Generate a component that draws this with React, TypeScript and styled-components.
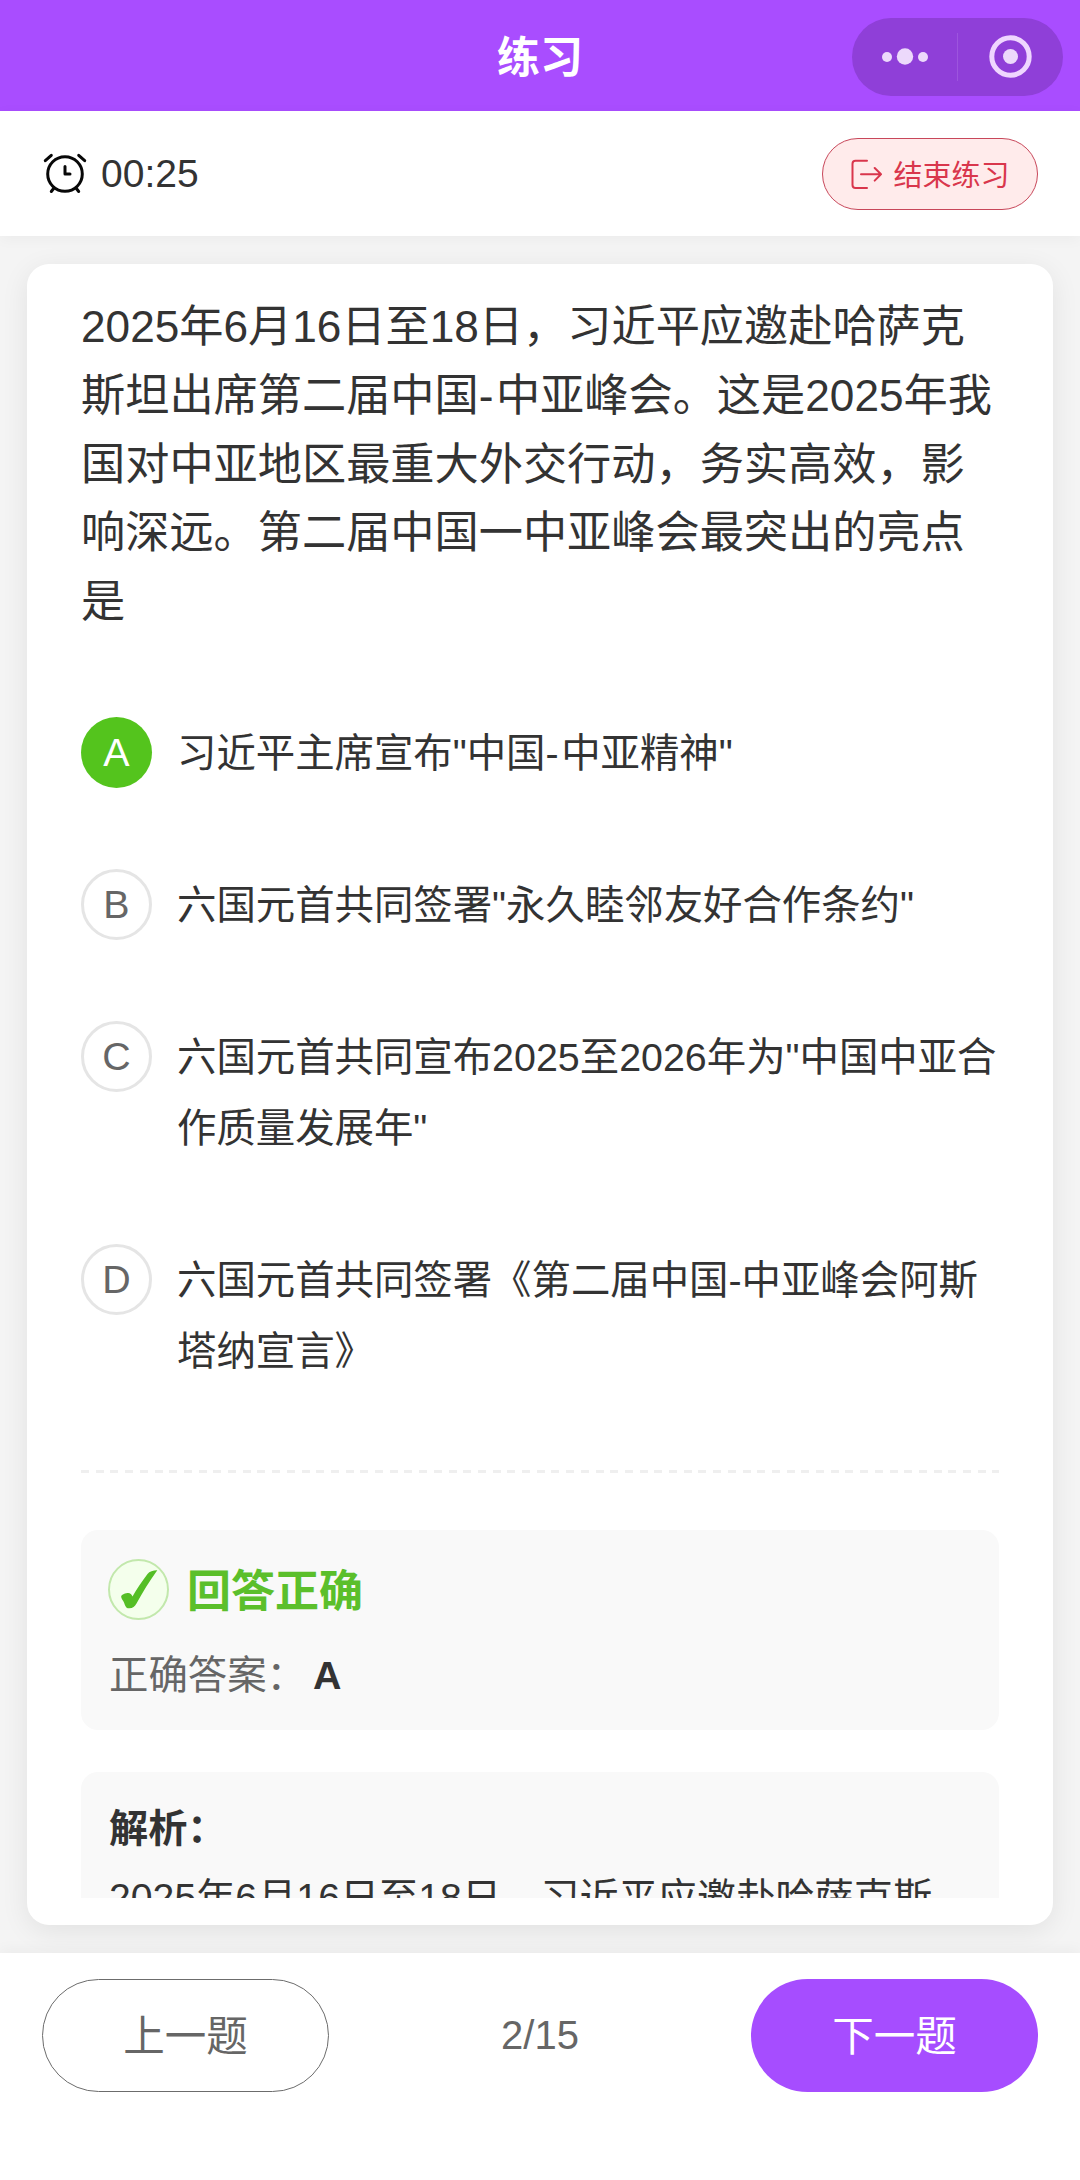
import React from "react";
import styled, { createGlobalStyle } from "styled-components";

const GlobalStyle = createGlobalStyle`
  * { box-sizing: border-box; }
  body {
    margin: 0;
    background: #f4f4f4;
    font-family: "Liberation Sans", "Noto Sans CJK SC", sans-serif;
    color: #333;
    text-autospace: no-autospace;
    text-spacing-trim: space-all;
  }
  button { font-family: inherit; margin: 0; padding: 0; cursor: pointer; }
`;

const Page = styled.div`
  display: flex;
  flex-direction: column;
  width: 1080px;
  height: 2180px;
  overflow: hidden;
  background: #f4f4f4;
`;

const NavBar = styled.header`
  display: grid;
  grid-template-columns: 1fr auto 1fr;
  align-items: center;
  flex: none;
  height: 111px;
  padding: 3px 17px 0;
  background: #a94dff;
`;

const NavTitle = styled.h1`
  grid-column: 2;
  margin: 0;
  padding-top: 2px;
  font-size: 43px;
  line-height: 60px;
  font-weight: 700;
  color: #fff;
`;

const Capsule = styled.div`
  justify-self: end;
  display: flex;
  align-items: center;
  width: 211px;
  height: 78px;
  border-radius: 39px;
  background: #8f3fd8;
`;

const CapsuleHalf = styled.div`
  flex: 1;
  display: flex;
  align-items: center;
  justify-content: center;
`;

const CapsuleDivider = styled.div`
  width: 1px;
  height: 48px;
  background: #9d55de;
`;

const StatusBar = styled.section`
  position: relative;
  z-index: 1;
  display: flex;
  align-items: center;
  justify-content: space-between;
  flex: none;
  height: 125px;
  padding: 1px 42px 0;
  background: #fff;
  box-shadow: 0 3px 14px rgba(0, 0, 0, 0.04);
`;

const Timer = styled.div`
  display: flex;
  align-items: center;
  gap: 13px;
  font-size: 39px;
  line-height: 48px;
`;

const EndButton = styled.button`
  display: flex;
  align-items: center;
  justify-content: center;
  gap: 11px;
  width: 216px;
  height: 72px;
  border: 1px solid #c8475a;
  border-radius: 36px;
  background: #ffebeb;
  color: #d9364c;
  font-size: 29px;
`;

const EndLabel = styled.span`
  padding-bottom: 3px;
`;

const Main = styled.main`
  flex: 1;
  min-height: 0;
  display: flex;
  padding: 28px 27px;
`;

const Card = styled.article`
  flex: 1;
  min-width: 0;
  padding: 29px 54px 27px;
  border-radius: 22px;
  background: #fff;
  box-shadow: 0 6px 28px rgba(0, 0, 0, 0.08);
`;

const Scroller = styled.div`
  height: 100%;
  overflow: hidden;
`;

const Question = styled.p`
  margin: 0;
  font-size: 44.2px;
  line-height: 68.8px;
`;

const Hyphen = styled.span`
  letter-spacing: 2.5px;
`;

const Options = styled.ul`
  display: flex;
  flex-direction: column;
  gap: 81px;
  margin: 80px 0 0;
  padding: 0;
  list-style: none;
`;

const Option = styled.li`
  display: flex;
  gap: 25px;
`;

const Letter = styled.span<{ $correct?: boolean }>`
  display: flex;
  align-items: center;
  justify-content: center;
  flex: none;
  width: 71px;
  height: 71px;
  border-radius: 50%;
  border: ${(p) => (p.$correct ? "none" : "3px solid #e5e5e5")};
  background: ${(p) => (p.$correct ? "#54c41d" : "#fff")};
  color: ${(p) => (p.$correct ? "#fff" : "#666")};
  font-size: 39.4px;
  line-height: 1;
`;

const OptionText = styled.span`
  flex: 1;
  padding-top: 1px;
  margin-bottom: -1px;
  font-size: 39.4px;
  line-height: 71px;
`;

const Divider = styled.div`
  height: 3px;
  margin-top: 84px;
  background: repeating-linear-gradient(90deg, #efefef 0 8px, transparent 8px 14.7px);
`;

const Panel = styled.section`
  padding: 28px;
  border-radius: 17px;
  background: #f9f9f9;
`;

const ResultPanel = styled(Panel)`
  height: 200px;
  margin-top: 57px;
`;

const ResultHead = styled.div`
  display: flex;
  align-items: center;
  gap: 18px;
  height: 63px;
  margin-left: -1px;
  color: #5bbf2b;
  font-size: 44px;
  font-weight: 700;
`;

const ResultTitle = styled.span`
  padding-bottom: 2px;
`;

const CheckBadge = styled.span`
  display: flex;
  align-items: center;
  justify-content: center;
  width: 61px;
  height: 61px;
  border: 2px solid #c2e8ac;
  border-radius: 50%;
  background: #f4ffec;
`;

const AnswerRow = styled.div`
  display: flex;
  align-items: center;
  margin-top: 26px;
  font-size: 39.4px;
  line-height: 57px;
  color: #666;
`;

const AnswerValue = styled.strong`
  margin-left: 7px;
  color: #333;
`;

const AnalysisPanel = styled(Panel)`
  margin-top: 42px;
  padding-top: 22px;
  font-size: 39.2px;
  line-height: 69px;
`;

const AnalysisTitle = styled.h2`
  margin: 0;
  font-size: inherit;
  font-weight: 700;
`;

const AnalysisText = styled.p`
  margin: 0;
`;

const Footer = styled.footer`
  position: relative;
  display: flex;
  justify-content: space-between;
  align-items: flex-start;
  flex: none;
  height: 227px;
  padding: 26px 42px;
  background: #fff;
  box-shadow: 0 -3px 14px rgba(0, 0, 0, 0.04);
`;

const PageButton = styled.button<{ $primary?: boolean }>`
  width: 287px;
  height: 113px;
  padding-bottom: 5px;
  border-radius: 57px;
  border: ${(p) => (p.$primary ? "none" : "1px solid #6c6c6c")};
  background: ${(p) => (p.$primary ? "#a64dff" : "#fff")};
  color: ${(p) => (p.$primary ? "#fff" : "#666")};
  font-size: 41.5px;
`;

const Progress = styled.span`
  color: #666;
  font-size: 40px;
  line-height: 113px;
`;

const MoreIcon = () => (
  <svg width="48" height="20" viewBox="0 0 48 20" fill="#ecd9fb">
    <circle cx="6" cy="10" r="5" />
    <circle cx="24" cy="9.500" r="8.200" />
    <circle cx="42" cy="10" r="5" />
  </svg>
);

const TargetIcon = () => (
  <svg width="44" height="44" viewBox="0 0 44 44">
    <circle cx="21.500" cy="21.500" r="18.700" fill="none" stroke="#efd6ff" strokeWidth="5" />
    <circle cx="21.500" cy="21.500" r="7.500" fill="#ecd9fb" />
  </svg>
);

const ClockIcon = () => (
  <svg width="46" height="44" viewBox="0 0 46 44" fill="none" stroke="#080808" strokeWidth="3" strokeLinecap="round" strokeLinejoin="round">
    <circle cx="23" cy="22" r="17.300" />
    <path d="M23 14.500V22h5" />
    <path d="M3.300 8.700 9.300 3.300M42.700 8.700 36.700 3.300" />
    <path d="M12 36 9.300 39.500M34 36l2.700 3.500" />
  </svg>
);

const ExitIcon = () => (
  <svg width="32" height="32" viewBox="0 0 32 32" fill="none" stroke="#d9364c" strokeWidth="2" strokeLinecap="round" strokeLinejoin="round">
    <path d="M17 2.800H5.500Q2.500 2.800 2.500 5.800V27Q2.500 30 5.500 30H17" />
    <path d="M11 16.300H31M24.700 10l6.300 6.300-6.300 6.300" />
  </svg>
);

const CheckIcon = () => (
  <svg width="40" height="42" viewBox="0 0 40 42" fill="#54be25">
    <path d="M38.300 2.300C34.500 2.200 30.500 3.500 28.500 6C23.500 12.500 18 20.500 13.500 28.500C12.500 26 11 24.700 8.500 25C5 25.500 2 27 2.200 29C2.400 31 4 32 5.200 35C6.400 38.300 7 40.500 10.300 40.300C13.800 40.100 15.800 38.500 17.500 35.500C23.500 24.500 30.500 13 38.300 2.300Z" />
  </svg>
);

const options = [
  { letter: "A", text: '习近平主席宣布"中国-中亚精神"', correct: true },
  { letter: "B", text: '六国元首共同签署"永久睦邻友好合作条约"' },
  { letter: "C", text: '六国元首共同宣布2025至2026年为"中国中亚合作质量发展年"' },
  { letter: "D", text: "六国元首共同签署《第二届中国-中亚峰会阿斯塔纳宣言》" },
];

const withHyphens = (text: string) =>
  text.split("-").map((part, i) => (
    <React.Fragment key={i}>
      {i > 0 && <Hyphen>-</Hyphen>}
      {part}
    </React.Fragment>
  ));

const question =
  "2025年6月16日至18日，习近平应邀赴哈萨克斯坦出席第二届中国-中亚峰会。这是2025年我国对中亚地区最重大外交行动，务实高效，影响深远。第二届中国一中亚峰会最突出的亮点是";

export default function App() {
  return (
    <Page>
      <GlobalStyle />
      <NavBar>
        <NavTitle>练习</NavTitle>
        <Capsule>
          <CapsuleHalf><MoreIcon /></CapsuleHalf>
          <CapsuleDivider />
          <CapsuleHalf><TargetIcon /></CapsuleHalf>
        </Capsule>
      </NavBar>
      <StatusBar>
        <Timer>
          <ClockIcon />
          <span>00:25</span>
        </Timer>
        <EndButton>
          <ExitIcon />
          <EndLabel>结束练习</EndLabel>
        </EndButton>
      </StatusBar>
      <Main>
        <Card>
          <Scroller>
            <Question>{withHyphens(question)}</Question>
            <Options>
              {options.map((o) => (
                <Option key={o.letter}>
                  <Letter $correct={o.correct}>{o.letter}</Letter>
                  <OptionText>{o.letter === "A" ? withHyphens(o.text) : o.text}</OptionText>
                </Option>
              ))}
            </Options>
            <Divider />
            <ResultPanel>
              <ResultHead>
                <CheckBadge><CheckIcon /></CheckBadge>
                <ResultTitle>回答正确</ResultTitle>
              </ResultHead>
              <AnswerRow>
                <span>正确答案：</span>
                <AnswerValue>A</AnswerValue>
              </AnswerRow>
            </ResultPanel>
            <AnalysisPanel>
              <AnalysisTitle>解析：</AnalysisTitle>
              <AnalysisText>2025年6月16日至18日，习近平应邀赴哈萨克斯</AnalysisText>
            </AnalysisPanel>
          </Scroller>
        </Card>
      </Main>
      <Footer>
        <PageButton>上一题</PageButton>
        <Progress>2/15</Progress>
        <PageButton $primary>下一题</PageButton>
      </Footer>
    </Page>
  );
}
